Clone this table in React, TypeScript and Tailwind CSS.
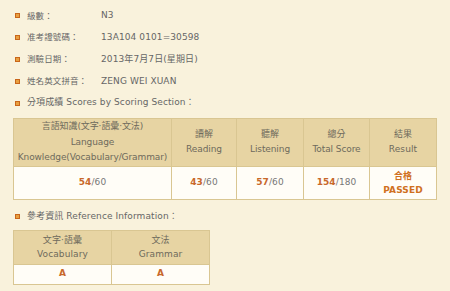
import React from "react";

const font = {
  fontFamily: '"DejaVu Sans", "Noto Sans CJK TC", sans-serif',
};

const Bullet = () => (
  <span className="inline-block w-[5px] h-[5px] bg-[#e8a040] border border-[#c9661a] shrink-0" />
);

const infoRows = [
  { label: "級數：", value: "N3" },
  { label: "准考證號碼：", value: "13A104 0101=30598" },
  { label: "測驗日期：", value: "2013年7月7日(星期日)" },
  { label: "姓名英文拼音：", value: "ZENG WEI XUAN" },
];

const scoreCols = [
  { w: "w-[158px]", zh: "言語知識(文字‧語彙‧文法)", en: ["Language", "Knowledge(Vocabulary/Grammar)"], score: "54", total: "60" },
  { w: "w-[65px]", zh: "讀解", en: ["Reading"], score: "43", total: "60" },
  { w: "w-[67px]", zh: "聽解", en: ["Listening"], score: "57", total: "60" },
  { w: "w-[66px]", zh: "總分", en: ["Total Score"], score: "154", total: "180" },
];

export default function App() {
  return (
    <div
      className="w-[450px] h-[291px] bg-[#f9f2dc] text-[#666] text-[9px] tracking-[0.1px] overflow-hidden pt-[5px] pl-[13px]"
      style={font}
    >
      <div className="flex flex-col">
        {infoRows.map((r) => (
          <div key={r.label} className="flex items-center h-[21.8px]">
            <span className="w-[14px] flex pl-[2px]">
              <Bullet />
            </span>
            <span className="w-[74px] text-[8.5px]">{r.label}</span>
            <span>{r.value}</span>
          </div>
        ))}
        <div className="flex items-center h-[21.8px]">
          <span className="w-[14px] flex pl-[2px]">
            <Bullet />
          </span>
          <span>分項成績 Scores by Scoring Section：</span>
        </div>
      </div>

      <table className="w-[423px] table-fixed mt-[4px] border-collapse border border-[#d9c692] text-center">
        <thead>
          <tr className="bg-[#e7d4a3] h-[48px] text-[#6e6a5c]">
            {scoreCols.map((c) => (
              <th key={c.zh} className={`${c.w} border border-[#d9c692] font-normal leading-[15.5px] p-0 tracking-[-0.1px]`}>
                <div>{c.zh}</div>
                {c.en.map((e) => (
                  <div key={e} className="whitespace-nowrap">{e}</div>
                ))}
              </th>
            ))}
            <th className="w-[67px] border border-[#d9c692] font-normal leading-[15.5px] p-0">
              <div>結果</div>
              <div>Result</div>
            </th>
          </tr>
        </thead>
        <tbody>
          <tr className="bg-[#fffdf7] h-[33px]">
            {scoreCols.map((c) => (
              <td key={c.zh} className="border border-[#d9c692] p-0">
                <span className="font-bold text-[#c8682a]">{c.score}</span>
                <span className="text-[#777]">/{c.total}</span>
              </td>
            ))}
            <td className="border border-[#d9c692] p-0 font-bold text-[#d0701e] leading-[14px]">
              <div>合格</div>
              <div>PASSED</div>
            </td>
          </tr>
        </tbody>
      </table>

      <div className="flex items-center h-[21.6px] mt-[6px]">
        <span className="w-[14px] flex pl-[2px]">
          <Bullet />
        </span>
        <span>參考資訊 Reference Information：</span>
      </div>

      <table className="w-[196px] table-fixed mt-[2px] border-collapse border border-[#d9c692] text-center">
        <thead>
          <tr className="bg-[#e7d4a3] h-[34px] text-[#6e6a5c]">
            <th className="w-[98px] border border-[#d9c692] font-normal leading-[14px] p-0">
              <div>文字‧語彙</div>
              <div>Vocabulary</div>
            </th>
            <th className="w-[98px] border border-[#d9c692] font-normal leading-[14px] p-0">
              <div>文法</div>
              <div>Grammar</div>
            </th>
          </tr>
        </thead>
        <tbody>
          <tr className="bg-[#fffdf7] h-[20px] font-bold text-[#c8682a]">
            <td className="border border-[#d9c692] p-0">A</td>
            <td className="border border-[#d9c692] p-0">A</td>
          </tr>
        </tbody>
      </table>
    </div>
  );
}
